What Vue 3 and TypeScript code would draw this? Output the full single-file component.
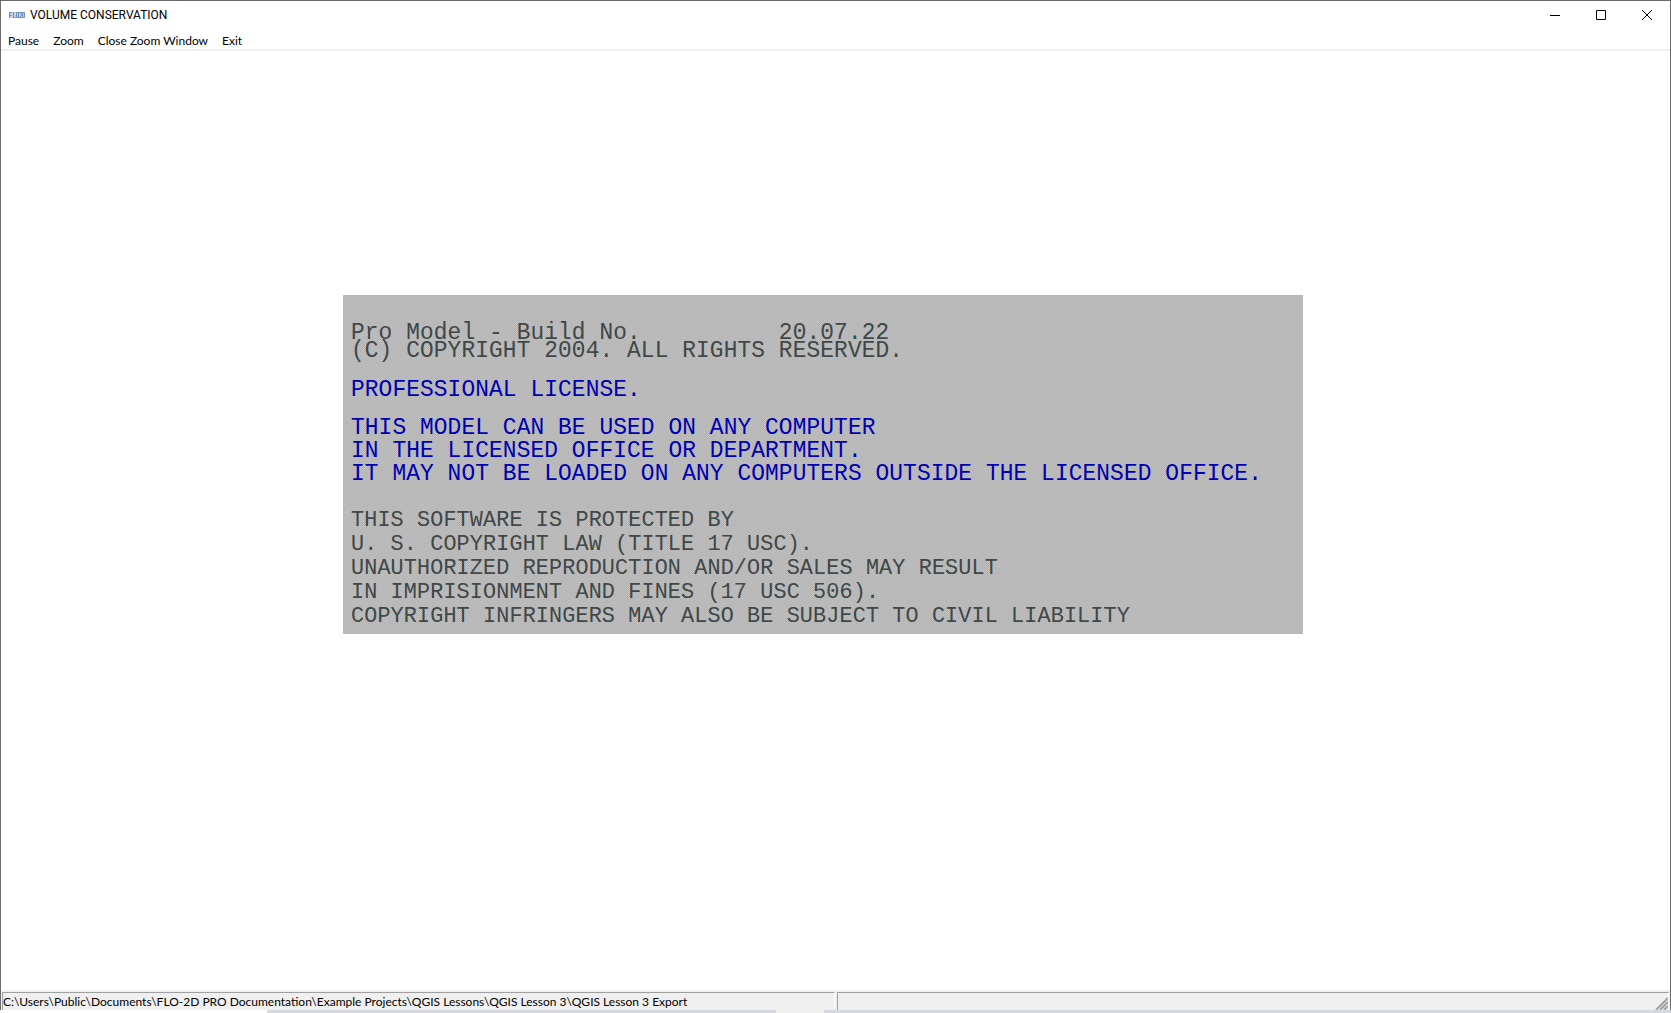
<script setup lang="ts">
interface Line {
  text: string
}

const menu: string[] = ['Pause', 'Zoom', 'Close Zoom Window', 'Exit']

const build: Line[] = [
  { text: 'Pro Model - Build No.          20.07.22' },
  { text: '(C) COPYRIGHT 2004. ALL RIGHTS RESERVED.' },
]

const license: Line[] = [
  { text: 'THIS MODEL CAN BE USED ON ANY COMPUTER' },
  { text: 'IN THE LICENSED OFFICE OR DEPARTMENT.' },
  { text: 'IT MAY NOT BE LOADED ON ANY COMPUTERS OUTSIDE THE LICENSED OFFICE.' },
]

const legal: Line[] = [
  { text: 'THIS SOFTWARE IS PROTECTED BY' },
  { text: 'U. S. COPYRIGHT LAW (TITLE 17 USC).' },
  { text: 'UNAUTHORIZED REPRODUCTION AND/OR SALES MAY RESULT' },
  { text: 'IN IMPRISIONMENT AND FINES (17 USC 506).' },
  { text: 'COPYRIGHT INFRINGERS MAY ALSO BE SUBJECT TO CIVIL LIABILITY' },
]

const path = 'C:\\Users\\Public\\Documents\\FLO-2D PRO Documentation\\Example Projects\\QGIS Lessons\\QGIS Lesson 3\\QGIS Lesson 3 Export'
</script>

<template>
  <div class="window">
    <header class="titlebar">
      <svg class="app-icon" width="16" height="16" viewBox="0 0 16 16" aria-hidden="true">
        <rect x="0" y="5" width="16" height="6" />
        <path d="M0.5 11V5.5H3M0.5 8.5H2.5M4.5 5V10.5H6.5M7.5 5.5H9.5V10.5H7.5ZM10 5.5H12.5V8L10.5 10.5H13M13.5 5.5H15.5V10.5H13.5Z" />
      </svg>
      <h1 class="title">VOLUME CONSERVATION</h1>
      <div class="controls">
        <button type="button" class="control" aria-label="Minimize">
          <svg width="10" height="10" viewBox="0 0 10 10"><path d="M0 5.5H10" /></svg>
        </button>
        <button type="button" class="control" aria-label="Maximize">
          <svg width="10" height="10" viewBox="0 0 10 10"><path d="M0.5 0.5H9.5V9.5H0.5Z" /></svg>
        </button>
        <button type="button" class="control" aria-label="Close">
          <svg width="10" height="10" viewBox="0 0 10 10"><path d="M0 0L10 10M10 0L0 10" /></svg>
        </button>
      </div>
    </header>

    <nav class="menubar">
      <button v-for="item in menu" :key="item" type="button" class="menu-item">{{ item }}</button>
    </nav>

    <main class="client">
      <section class="notice">
        <div class="build">
          <p v-for="line in build" :key="line.text">{{ line.text }}</p>
        </div>
        <p class="edition">PROFESSIONAL LICENSE.</p>
        <div class="license">
          <p v-for="line in license" :key="line.text">{{ line.text }}</p>
        </div>
        <div class="legal">
          <p v-for="line in legal" :key="line.text">{{ line.text }}</p>
        </div>
      </section>
    </main>

    <footer class="statusbar">
      <div class="pane">{{ path }}</div>
      <div class="pane">
        <svg class="grip" width="13" height="13" viewBox="0 0 13 13" aria-hidden="true">
          <path d="M1 13L13 1M5 13L13 5M9 13L13 9" />
        </svg>
      </div>
    </footer>
  </div>
  <div class="behind"><span></span><span></span><span></span><span></span></div>
</template>

<style>
body {
  margin: 0;
  background: #fff;
}

#app {
  display: flex;
  flex-direction: column;
  min-height: 100vh;
}
</style>

<style scoped>
.window {
  flex: 1;
  display: flex;
  flex-direction: column;
  border: 1px solid #6b6b6b;
  border-bottom: 0;
  font: 12px/16px Lato, sans-serif;
  color: #000;
}

.titlebar {
  display: flex;
  align-items: center;
  height: 28px;
  padding-left: 8px;
}

.app-icon {
  fill: #c4d2e8;
  stroke: #6d8fc0;
}

.app-icon rect {
  stroke: none;
}

.app-icon path {
  fill: none;
}

.title {
  margin: 0 0 0 5px;
  font-family: Roboto, sans-serif;
  font-size: 12px;
  font-weight: 400;
  line-height: 18px;
}

.controls {
  display: flex;
  margin-left: auto;
}

.control {
  display: flex;
  align-items: center;
  justify-content: center;
  width: 46px;
  height: 28px;
  padding: 0;
  border: 0;
  background: none;
}

.control svg {
  fill: none;
  stroke: #000;
}

.menubar {
  display: flex;
  height: 20px;
  border-bottom: 2px solid #f0f0f0;
}

.menu-item {
  padding: 4px 7px 0;
  border: 0;
  background: none;
  font: inherit;
  color: inherit;
}

.client {
  flex: 1;
  display: flex;
  justify-content: center;
  align-items: flex-start;
  padding: 244px 25px 24px 0;
}

.notice {
  box-sizing: border-box;
  width: 960px;
  padding: 29px 8px 5px;
  background: conic-gradient(#00ffff 25%, #c0c0c0 0 50%, #00ffff 0 75%, #c0c0c0 0) 0 0 / 2px 2px;
  font-family: "Liberation Mono", monospace;
  font-size: 23px;
  line-height: 23px;
  white-space: pre;
  color: #404848;
}

.notice p {
  margin: 0;
}

.build {
  line-height: 18px;
}

.edition {
  color: #0000b0;
}

.notice .edition {
  padding: 19px 0 15px;
}

.license {
  color: #0000b0;
}

.legal {
  padding-top: 23px;
  font-size: 22px;
  line-height: 24px;
}

.statusbar {
  display: flex;
  gap: 2px;
  padding: 2px 1px 0;
  background: #f0f0f0;
}

.pane {
  flex: 1;
  display: flex;
  align-items: center;
  height: 17px;
  border: 1px solid #a0a0a0;
  border-right-color: #fff;
  border-bottom: 0;
  white-space: nowrap;
}

.grip {
  margin: auto 0 0 auto;
  fill: none;
  stroke: #a0a0a0;
  stroke-width: 2;
}

.behind {
  display: flex;
  height: 3px;
}

.behind span:nth-child(1) {
  width: 16%;
}

.behind span:nth-child(2) {
  flex: 3;
  background: #d8d8e0;
}

.behind span:nth-child(3) {
  width: 48px;
  background: #f0f0f0;
}

.behind span:nth-child(4) {
  flex: 5;
  background: #d8d8e0;
}
</style>
